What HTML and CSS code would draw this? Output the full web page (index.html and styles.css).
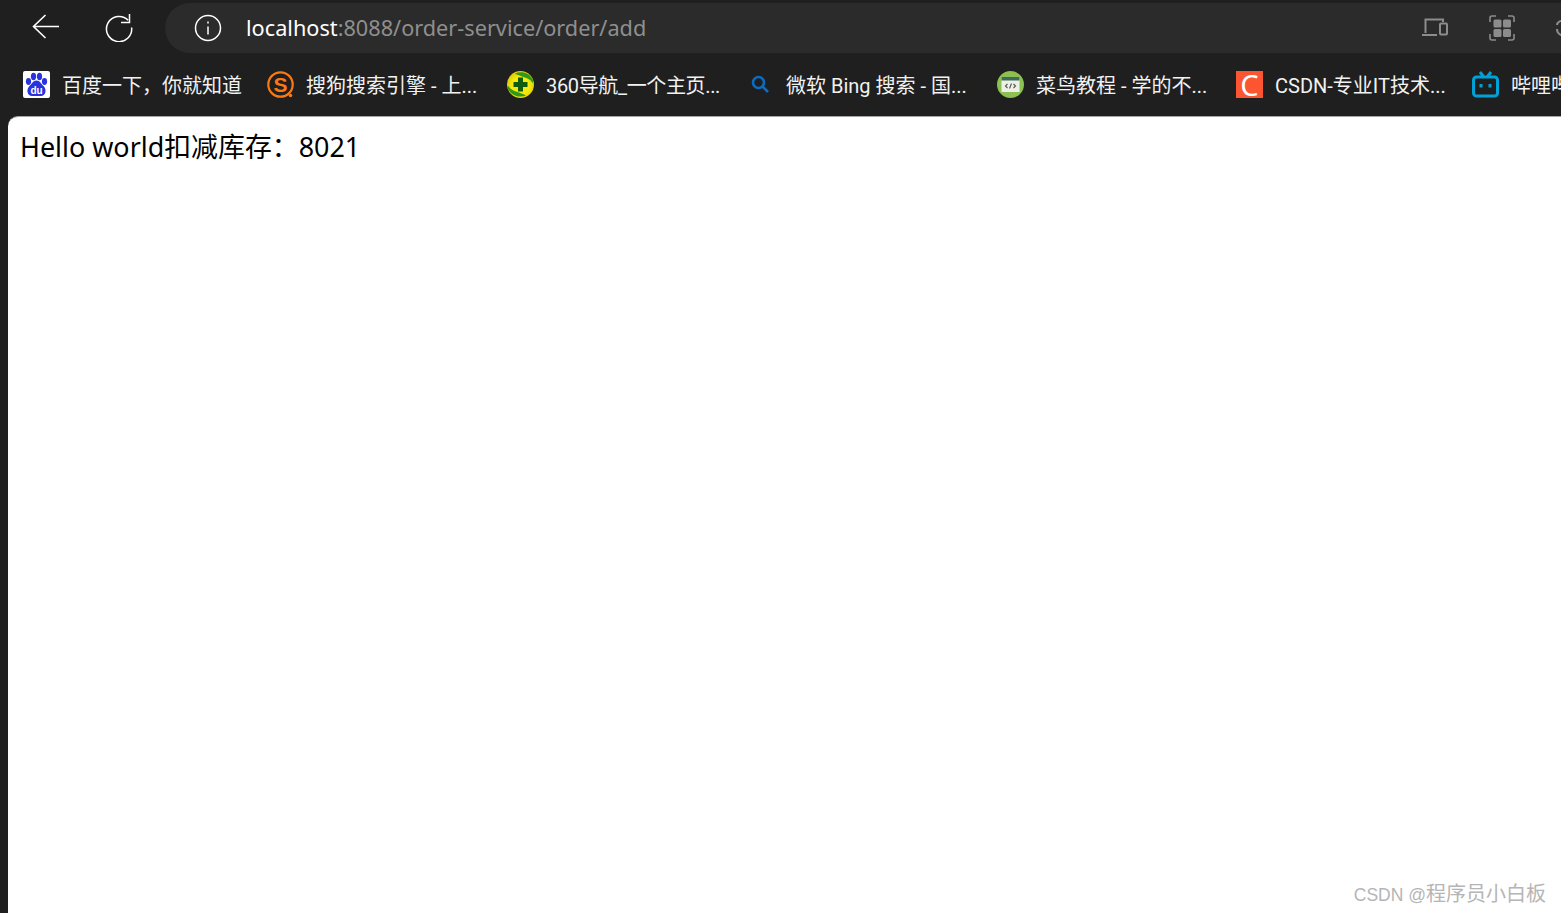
FILE: index.html
```html
<!DOCTYPE html>
<html lang="zh-CN">
<head>
  <meta charset="UTF-8" />
  <title>localhost:8088/order-service/order/add</title>
  <link rel="stylesheet" href="styles.css">
</head>
<body>
  <div class="browser">
    <div class="toolbar">
      <button class="nav-btn back-btn" aria-label="Back">
        <svg width="30" height="30" viewBox="0 0 30 30" fill="none" stroke="#fff" stroke-width="1.6"><path d="M2.500 14.500H28M14.500 3 2.500 14.500 14.500 26"/></svg>
      </button>
      <button class="nav-btn reload-btn" aria-label="Reload">
        <svg width="30" height="30" viewBox="0 0 30 30" fill="none" stroke="#fff" stroke-width="1.5"><path d="M24.200 8.300A12.600 12.600 0 1 0 27.600 15.500"/><path d="M17 10.500H25.500V2"/></svg>
      </button>
      <div class="address-bar">
        <svg class="info-icon" width="28" height="28" viewBox="0 0 28 28" fill="none" stroke="#fff" stroke-width="1.5"><circle cx="14" cy="14" r="12.500"/><path d="M14 12.500V20.500"/><path d="M14 7.500V9.500"/></svg>
        <div class="url"><span class="host">localhost</span>:8088/order-service/order/add</div>
        <div class="bar-actions">
          <svg width="26" height="24" viewBox="0 0 26 24" fill="none" stroke="#8c8c8c" stroke-width="2"><path d="M3.500 17V3.500H21V6"/><path d="M0 19H15"/><rect x="18" y="7.500" width="7" height="11" rx="1"/></svg>
          <svg width="26" height="26" viewBox="0 0 26 26" fill="none" stroke="#8c8c8c" stroke-width="1.600"><path d="M7 1H3Q1 1 1 3V7M19 1H23Q25 1 25 3V7M7 25H3Q1 25 1 23V19M19 25H23Q25 25 25 23V19"/><g fill="#8c8c8c" stroke="none"><rect x="4.500" y="4.500" width="8" height="8" rx="1.500"/><rect x="14" y="4.500" width="8" height="8" rx="1.500"/><rect x="4.500" y="14" width="8" height="8" rx="1.500"/><rect x="14" y="14" width="8" height="8" rx="1.500"/></g></svg>
          <svg width="26" height="26" viewBox="0 0 26 26" fill="none" stroke="#8c8c8c" stroke-width="2"><path d="M12 6.500C6 4 1 7 1 10M1 14C1 19 5 21 12 20.500"/></svg>
        </div>
      </div>
    </div>

    <div class="bookmarks">
      <a class="bookmark">
        <svg class="fav" viewBox="0 0 27 27"><rect width="27" height="27" rx="2" fill="#fff"/><g fill="#2932e1"><ellipse cx="5.500" cy="10.500" rx="2.600" ry="3.400"/><ellipse cx="10.500" cy="5.500" rx="2.600" ry="3.700"/><ellipse cx="16.500" cy="5.500" rx="2.600" ry="3.700"/><ellipse cx="21.500" cy="10.500" rx="2.600" ry="3.400"/><path d="M13.500 9.500C17 9.500 18 13 21 15.500 24 19 22.500 25 18 25H9C4.500 25 3 19 6 15.500 9 13 10 9.500 13.500 9.500Z"/></g><text class="baidu-du" x="13.500" y="23" text-anchor="middle">du</text></svg>
        <span>百度一下，你就知道</span>
      </a>
      <a class="bookmark">
        <svg class="fav" viewBox="0 0 27 27"><circle cx="13.500" cy="13.500" r="12.200" fill="none" stroke="#f97a14" stroke-width="2.200"/><circle cx="23.500" cy="24.500" r="1.800" fill="#f97a14"/><text class="sogou-s" x="13.500" y="21" text-anchor="middle">S</text></svg>
        <span>搜狗搜索引擎 - 上...</span>
      </a>
      <a class="bookmark bookmark-tight">
        <svg class="fav" viewBox="0 0 27 27"><defs><radialGradient id="ball" cx="0.500" cy="0.550" r="0.550"><stop offset="0.600" stop-color="#f6e70c"/><stop offset="1" stop-color="#d9c80a"/></radialGradient></defs><circle cx="13.500" cy="13.500" r="13.500" fill="url(#ball)"/><path d="M8 2.500C14 0 22 1 26 9 26.500 11 26 13 25 11 21 6 14 6 8 2.500ZM19 24.500C13 27 5 25.500 1 18 .5 16 1 14 2 16 6 21 13 21 19 24.500Z" fill="#2e9a1a"/><path d="M11 6.500H16V11H20.500V16H16V20.500H11V16H6.500V11H11Z" fill="#0f5c10"/></svg>
        <span>360导航_一个主页...</span>
      </a>
      <a class="bookmark">
        <svg class="fav" viewBox="0 0 27 27" fill="none" stroke="#0c6cc0" stroke-width="2.600"><circle cx="11.500" cy="11.500" r="5.500"/><path d="M15.500 15.500 21 21"/></svg>
        <span>微软 Bing 搜索 - 国...</span>
      </a>
      <a class="bookmark">
        <svg class="fav" viewBox="0 0 27 27"><circle cx="13.500" cy="13.500" r="13.500" fill="#8cc152"/><rect x="4.500" y="6" width="18" height="15" fill="#eef0e6"/><rect x="4.500" y="6" width="18" height="3.500" fill="#3f6b5c"/><path d="M10.500 13 8.500 15 10.500 17M16.500 13 18.500 15 16.500 17M14.500 12.500 12.500 17.500" fill="none" stroke="#4a5a55" stroke-width="1.100"/></svg>
        <span>菜鸟教程 - 学的不...</span>
      </a>
      <a class="bookmark">
        <div class="fav csdn-fav">C</div>
        <span>CSDN-专业IT技术...</span>
      </a>
      <a class="bookmark">
        <svg class="fav" viewBox="0 0 27 27" fill="none" stroke="#00a1d6" stroke-width="3"><rect x="1.500" y="6" width="24" height="19" rx="3"/><path d="M8 1 11.500 5.500M19 1 15.500 5.500"/><path d="M9 13V16.500M18 13V16.500"/></svg>
        <span>哔哩哔哩</span>
      </a>
    </div>

    <div class="content">
      <div class="page">
        <p class="message">Hello world扣减库存：8021</p>
        <span class="watermark"><span class="watermark-latin">CSDN @</span>程序员小白板</span>
      </div>
    </div>
  </div>
</body>
</html>
```

FILE: styles.css
```css
* {
  margin: 0;
  padding: 0;
  box-sizing: border-box;
}

html, body {
  height: 100%;
  overflow: hidden;
  background: #1f1f1f;
}

body {
  font-family: "Noto Sans", "Noto Sans CJK SC", sans-serif;
}

.browser {
  width: 1561px;
  height: 913px;
  display: flex;
  flex-direction: column;
  overflow: hidden;
}

.toolbar {
  height: 57px;
  flex-shrink: 0;
  display: flex;
  align-items: flex-start;
  padding-top: 3px;
}

.nav-btn {
  flex-shrink: 0;
  width: 30px;
  height: 30px;
  background: none;
  border: none;
  margin-top: 9px;
}

.back-btn {
  margin-left: 31px;
}

.reload-btn {
  margin-left: 43px;
}

.address-bar {
  flex-shrink: 0;
  margin-left: 31px;
  width: 1440px;
  height: 50px;
  background: #2b2b2b;
  border-radius: 25px 0 0 25px;
  display: flex;
  align-items: center;
  padding-left: 29px;
}

.info-icon {
  flex-shrink: 0;
}

.url {
  margin-left: 24px;
  padding-bottom: 2px;
  font-size: 21.7px;
  color: #8f8f8f;
  white-space: nowrap;
  width: 1176px;
}

.host {
  color: #fff;
}

.bar-actions {
  display: flex;
  align-items: center;
  gap: 41px;
}

.bookmarks {
  height: 59px;
  flex-shrink: 0;
  display: grid;
  grid-template-columns: 244px 240px 240px 250px 239px 236px 120px;
  align-items: center;
  padding: 0 0 4px 23px;
  white-space: nowrap;
}

.bookmark {
  display: flex;
  align-items: center;
  gap: 12px;
  font-family: Roboto, "Noto Sans CJK SC", sans-serif;
  font-size: 20px;
  color: #f2f2f2;
}

.bookmark-tight span {
  letter-spacing: -0.35px;
}

.fav {
  width: 27px;
  height: 27px;
  flex-shrink: 0;
}

.baidu-du {
  font-family: "Liberation Sans", sans-serif;
  font-size: 10px;
  font-weight: 700;
  fill: #fff;
}

.sogou-s {
  font-family: "Liberation Sans", sans-serif;
  font-size: 21px;
  font-weight: 700;
  fill: #f97a14;
}

.csdn-fav {
  background: #fc5531;
  color: #fff;
  font-family: "Noto Sans", sans-serif;
  font-size: 29px;
  line-height: 27px;
  text-align: center;
}

.content {
  flex: 1;
  padding-left: 8px;
}

.page {
  position: relative;
  height: 100%;
  background: #fff;
  border-top: 1px solid #a3a3a3;
  border-top-left-radius: 10px;
  padding: 10px 0 0 12px;
}

.message {
  font-size: 26.900px;
  line-height: 39px;
  color: #000;
}

.watermark {
  position: absolute;
  right: 15px;
  bottom: 6px;
  font-family: "Liberation Sans", "Noto Sans CJK SC", sans-serif;
  font-size: 20px;
  color: #b5b5b5;
}

.watermark-latin {
  font-size: 17.500px;
}
```
